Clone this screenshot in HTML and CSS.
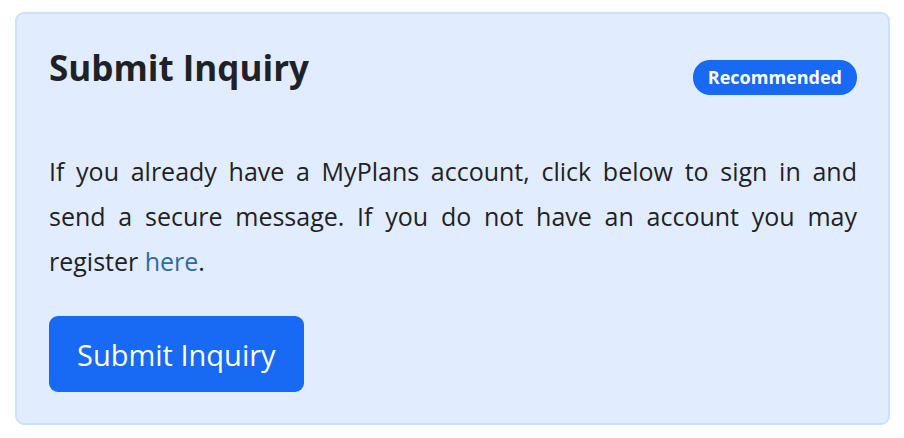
FILE: index.html
```html
<!DOCTYPE html>
<html lang="en">
<head>
<meta charset="utf-8">
<title>Submit Inquiry</title>
<link rel="stylesheet" href="styles.css">
</head>
<body>
<div class="card">
  <div class="card-head">
    <h2 class="title">Submit Inquiry</h2>
    <span class="badge">Recommended</span>
  </div>
  <p class="text">If you already have a MyPlans account, click below to sign in and send a secure message. If you do not have an account you may register <a href="#" class="link">here</a>.</p>
  <button class="btn" type="button">Submit Inquiry</button>
</div>
</body>
</html>
```
FILE: styles.css
```css
html, body {
  margin: 0;
  padding: 0;
  background: #ffffff;
}
body {
  padding: 12px 14px 13px 15px;
  font-family: "Open Sans", Lato, sans-serif;
  color: #1e2226;
}
.card {
  box-sizing: border-box;
  height: 413px;
  background: #e1edfe;
  border: 2px solid #cddff9;
  border-radius: 9px;
  padding: 30px 31px 30px 32px;
}
.card-head {
  display: flex;
  align-items: flex-start;
  justify-content: space-between;
  height: 58px;
}
.title {
  margin: 4px 0 0;
  font-size: 35px;
  font-weight: 700;
  line-height: 40px;
}
.badge {
  margin-top: 16px;
  background: #1869f3;
  color: #fff;
  font-size: 18px;
  font-weight: 700;
  border-radius: 17px;
  padding: 6px 15px;
  line-height: 23px;
}
.text {
  margin: 47px 0 0;
  font-size: 25px;
  line-height: 45px;
  text-align: justify;
}
.link {
  color: #2b6ca6;
  text-decoration: none;
}
.btn {
  display: block;
  margin-top: 32px;
  height: 76px;
  padding: 0 28px;
  background: #1869f3;
  color: #fff;
  border: none;
  border-radius: 9px;
  font-family: "Open Sans", Lato, sans-serif;
  font-size: 29px;
}
```
